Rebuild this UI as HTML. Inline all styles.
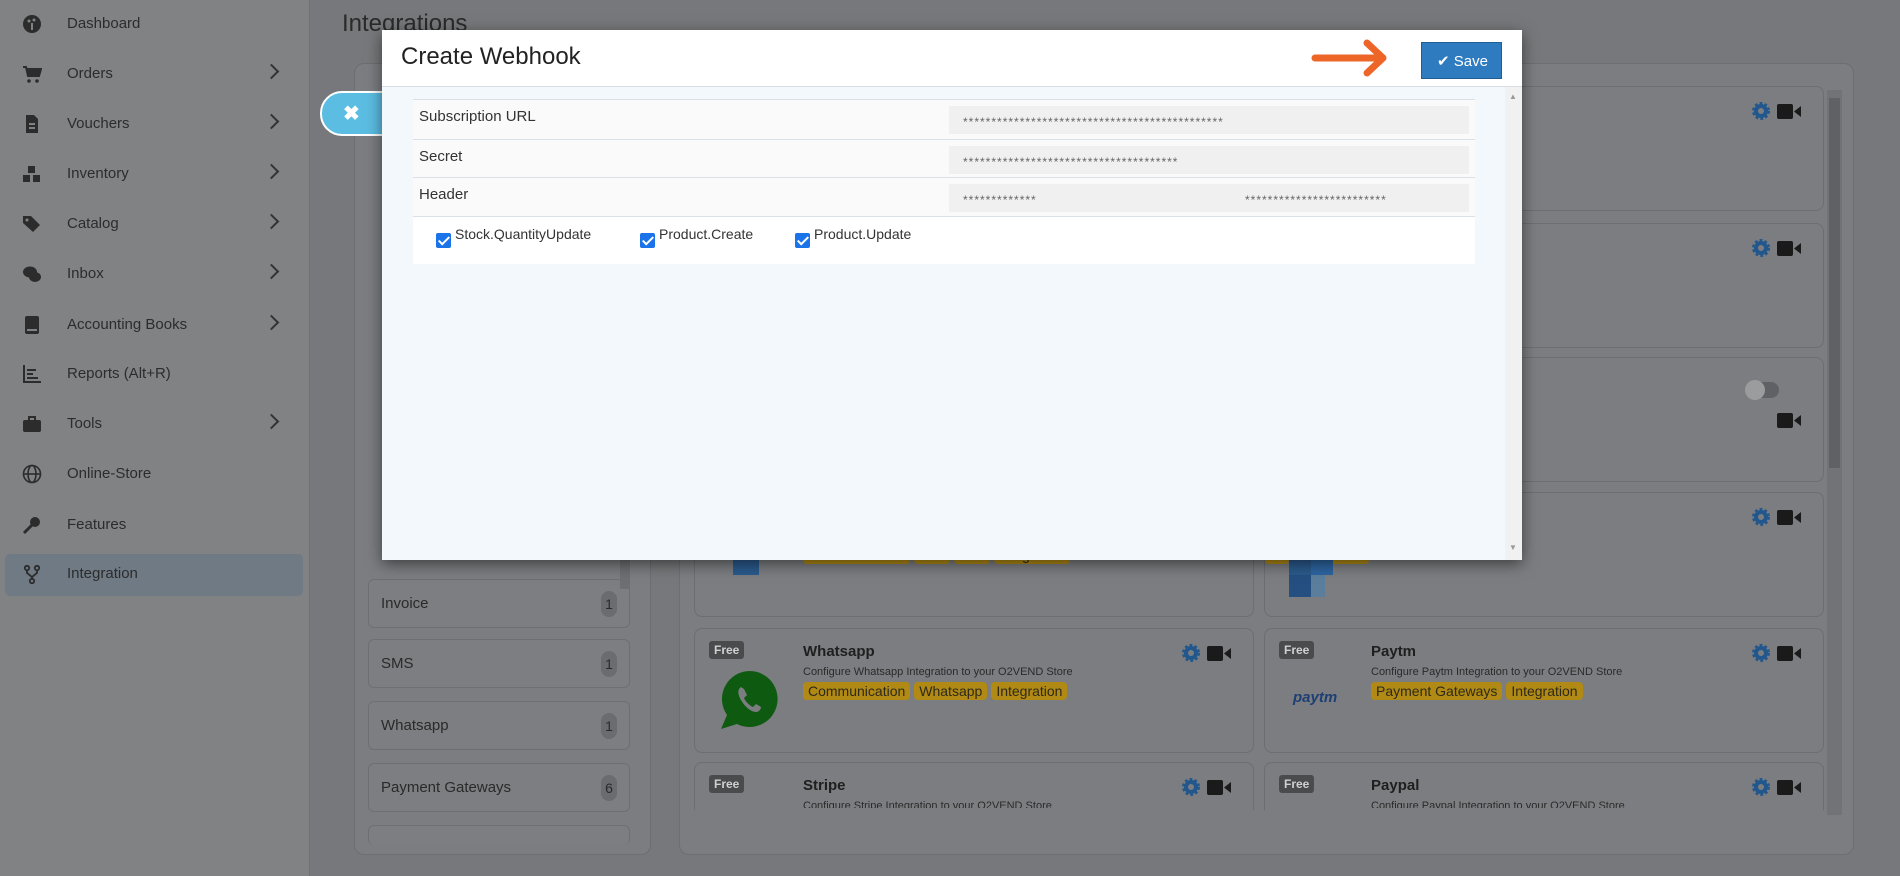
<!DOCTYPE html>
<html><head><meta charset="utf-8"><style>
*{box-sizing:border-box;margin:0;padding:0}
body{width:1900px;height:876px;overflow:hidden;background:#76787b;font-family:"Liberation Sans",sans-serif;position:relative;color:#2a2a2a}
.abs{position:absolute}
.side{left:0;top:0;width:310px;height:876px;background:#808284;border-right:1px solid #6f7174}
.si{position:absolute;left:0;width:310px;height:40px;font-size:15px;color:#2c2c2c}
.si .ic{position:absolute;left:22px;top:10px;width:20px;height:20px}
.si .t{position:absolute;left:67px;top:11px}
.si .ch{position:absolute;left:266px;top:12px;width:11px;height:11px;border-right:2px solid #333;border-top:2px solid #333;transform:rotate(45deg)}
.panel{background:#7b7d80;border:1px solid #6c6e71;border-radius:10px}
.li{position:absolute;left:14px;width:262px;height:49px;background:#7c7e81;border:1px solid #6d6f72;border-radius:6px;font-size:15px}
.li span{position:absolute;left:12px;top:15px}
.li b{position:absolute;right:12px;top:11px;width:16px;height:26px;border-radius:8px;background:#6a6c6f;font-weight:normal;text-align:center;line-height:26px;font-size:14px}
.card{position:absolute;width:560px;height:125px;background:#7b7d80;border:1px solid #6c6e71;border-radius:8px}
.free{position:absolute;left:14px;top:12px;background:#4a4b4d;color:#d0d0d0;font-size:12px;font-weight:bold;padding:2px 5px;border-radius:3px}
.ttl{position:absolute;left:108px;top:14px;font-weight:bold;font-size:15px;color:#1f1f1f}
.desc{position:absolute;left:108px;top:37px;font-size:11px;color:#2a2a2a;white-space:nowrap}
.tags{position:absolute;left:108px;top:53px;white-space:nowrap}
.tag{display:inline-block;background:#b08a14;color:#2e2a1c;font-size:14px;padding:1px 5px;border-radius:4px;margin-right:4px}
.gear{position:absolute;right:52px;top:14px;width:20px;height:20px}
.cam{position:absolute;right:22px;top:17px;width:24px;height:15px}
.modal{left:382px;top:30px;width:1140px;height:530px;background:#f3f8fd;box-shadow:0 4px 14px rgba(0,0,0,.5)}
.mh{position:absolute;left:0;top:0;width:1140px;height:57px;background:#fff;border-bottom:1px solid #d8dde3}
.row{position:absolute;left:31px;width:1062px;background:#fafafa;border-top:1px solid #dbe0e6;font-size:15px;color:#333}
.row .lb{position:absolute;left:6px;top:8px}
.inp{position:absolute;background:#f0f0f0;height:28px;font-size:12px;color:#666;padding:9px 14px;letter-spacing:1px;white-space:nowrap;overflow:hidden}
.cb{position:absolute;top:16px;width:15px;height:15px;background:#1a73e8;border-radius:2px}
.cb:after{content:"";position:absolute;left:5px;top:1px;width:4px;height:9px;border:solid #fff;border-width:0 2px 2px 0;transform:rotate(45deg)}
.cbl{position:absolute;top:9px;font-size:14px;color:#333}
</style></head><body>

<div class="abs side">
<div class="si" style="top:4px"><svg class="ic" viewBox="0 0 20 20"><circle cx="10" cy="10" r="9" fill="#2c2c2c"/><circle cx="7" cy="7" r="1.5" fill="#808284"/><circle cx="12" cy="6" r="1.5" fill="#808284"/><rect x="9" y="9" width="2" height="7" fill="#808284"/></svg><span class="t">Dashboard</span></div>
<div class="si" style="top:54px"><svg class="ic" viewBox="0 0 20 20"><path d="M1 3h3l2 9h11l2-7H5" fill="#2c2c2c" stroke="#2c2c2c" stroke-width="2"/><circle cx="7" cy="17" r="1.8" fill="#2c2c2c"/><circle cx="15" cy="17" r="1.8" fill="#2c2c2c"/></svg><span class="t">Orders</span><i class="ch"></i></div>
<div class="si" style="top:104px"><svg class="ic" viewBox="0 0 20 20"><path d="M4 1h8l4 4v14H4z" fill="#2c2c2c"/><rect x="7" y="9" width="6" height="2" fill="#808284"/><rect x="7" y="13" width="6" height="2" fill="#808284"/></svg><span class="t">Vouchers</span><i class="ch"></i></div>
<div class="si" style="top:154px"><svg class="ic" viewBox="0 0 20 20"><rect x="6" y="2" width="7" height="7" fill="#2c2c2c"/><rect x="1" y="11" width="7" height="7" fill="#2c2c2c"/><rect x="11" y="11" width="7" height="7" fill="#2c2c2c"/></svg><span class="t">Inventory</span><i class="ch"></i></div>
<div class="si" style="top:204px"><svg class="ic" viewBox="0 0 20 20"><path d="M1 2h8l9 9-7 7-10-9z" fill="#2c2c2c"/><circle cx="5" cy="6" r="1.5" fill="#808284"/></svg><span class="t">Catalog</span><i class="ch"></i></div>
<div class="si" style="top:254px"><svg class="ic" viewBox="0 0 20 20"><ellipse cx="8" cy="8" rx="7" ry="5.5" fill="#2c2c2c"/><ellipse cx="13" cy="13" rx="6" ry="5" fill="#2c2c2c"/></svg><span class="t">Inbox</span><i class="ch"></i></div>
<div class="si" style="top:305px"><svg class="ic" viewBox="0 0 20 20"><rect x="3" y="1" width="14" height="18" rx="2" fill="#2c2c2c"/><rect x="5" y="14" width="10" height="2" fill="#808284"/></svg><span class="t">Accounting Books</span><i class="ch"></i></div>
<div class="si" style="top:354px"><svg class="ic" viewBox="0 0 20 20"><path d="M2 1v17h17" stroke="#2c2c2c" stroke-width="2" fill="none"/><rect x="5" y="5" width="9" height="2" fill="#2c2c2c"/><rect x="5" y="9" width="6" height="2" fill="#2c2c2c"/><rect x="5" y="13" width="11" height="2" fill="#2c2c2c"/></svg><span class="t">Reports (Alt+R)</span></div>
<div class="si" style="top:404px"><svg class="ic" viewBox="0 0 20 20"><rect x="1" y="6" width="18" height="12" rx="2" fill="#2c2c2c"/><rect x="7" y="3" width="6" height="4" fill="none" stroke="#2c2c2c" stroke-width="2"/></svg><span class="t">Tools</span><i class="ch"></i></div>
<div class="si" style="top:454px"><svg class="ic" viewBox="0 0 20 20"><circle cx="10" cy="10" r="8.5" fill="none" stroke="#2c2c2c" stroke-width="1.6"/><ellipse cx="10" cy="10" rx="4" ry="8.5" fill="none" stroke="#2c2c2c" stroke-width="1.6"/><path d="M2 10h16" stroke="#2c2c2c" stroke-width="1.6"/></svg><span class="t">Online-Store</span></div>
<div class="si" style="top:505px"><svg class="ic" viewBox="0 0 20 20"><circle cx="13" cy="7" r="5" fill="#2c2c2c"/><path d="M10 10L2 18" stroke="#2c2c2c" stroke-width="3"/></svg><span class="t">Features</span></div>
<div class="abs" style="left:5px;top:554px;width:298px;height:42px;background:#6f7a85;border-radius:5px"></div>
<div class="si" style="top:554px"><svg class="ic" viewBox="0 0 20 20"><circle cx="5" cy="4" r="2.2" fill="none" stroke="#2c2c2c" stroke-width="1.8"/><circle cx="15" cy="4" r="2.2" fill="none" stroke="#2c2c2c" stroke-width="1.8"/><circle cx="10" cy="17" r="2.2" fill="none" stroke="#2c2c2c" stroke-width="1.8"/><path d="M5 6v3l5 4v2M15 6v3l-5 4" fill="none" stroke="#2c2c2c" stroke-width="1.8"/></svg><span class="t">Integration</span></div>
</div>

<div class="abs" style="left:342px;top:10px;font-size:24px;color:#2a2a2a">Integrations</div>

<div class="abs panel" style="left:354px;top:63px;width:297px;height:792px"></div>
<div class="abs" style="left:354px;top:63px;width:297px">
<div class="li" style="top:516px"><span>Invoice</span><b>1</b></div>
<div class="li" style="top:576px"><span>SMS</span><b>1</b></div>
<div class="li" style="top:638px"><span>Whatsapp</span><b>1</b></div>
<div class="li" style="top:700px"><span>Payment Gateways</span><b>6</b></div>
<div class="li" style="top:762px;height:20px;border-bottom:none"></div>
<div class="abs" style="left:266px;top:0;width:10px;height:526px;background:#6d6f72"></div>
</div>

<div class="abs panel" style="left:679px;top:63px;width:1175px;height:792px"></div>
<div class="abs" style="left:1827px;top:90px;width:15px;height:725px;background:#717376"></div>
<div class="abs" style="left:1829px;top:98px;width:11px;height:370px;background:#5f6164"></div>

<div class="card" style="left:1264px;top:86px"><svg class="gear" viewBox="0 0 20 20"><circle cx="10" cy="10" r="7" fill="#21578c" stroke="#21578c" stroke-width="4" stroke-dasharray="2.5 2"/><circle cx="10" cy="10" r="3" fill="#7b7d80"/></svg><svg class="cam" viewBox="0 0 24 15"><rect width="16" height="15" rx="2" fill="#1a1a1a"/><path d="M17 7.5L24 2v11z" fill="#1a1a1a"/></svg><div class="desc" style="left:0">Configure Integration to your O2VEND Store</div><div class="tags" style="left:0"><span class="tag">Integration</span></div></div>
<div class="card" style="left:1264px;top:223px"><svg class="gear" viewBox="0 0 20 20"><circle cx="10" cy="10" r="7" fill="#21578c" stroke="#21578c" stroke-width="4" stroke-dasharray="2.5 2"/><circle cx="10" cy="10" r="3" fill="#7b7d80"/></svg><svg class="cam" viewBox="0 0 24 15"><rect width="16" height="15" rx="2" fill="#1a1a1a"/><path d="M17 7.5L24 2v11z" fill="#1a1a1a"/></svg><div class="desc" style="left:0">Integration to your O2VEND Store</div><div class="tags" style="left:0"><span class="tag">Integration</span></div></div>
<div class="card" style="left:1264px;top:357px"><div class="abs" style="right:44px;top:24px;width:30px;height:16px;border-radius:8px;background:#5f6164"></div><div class="abs" style="right:58px;top:22px;width:20px;height:20px;border-radius:10px;background:#9a9c9e"></div><svg class="cam" style="top:55px" viewBox="0 0 24 15"><rect width="16" height="15" rx="2" fill="#1a1a1a"/><path d="M17 7.5L24 2v11z" fill="#1a1a1a"/></svg><div class="desc" style="left:0">on to your O2VEND Store</div><div class="tags" style="left:0"><span class="tag">Integration</span></div></div>
<div class="card" style="left:1264px;top:492px"><svg class="gear" viewBox="0 0 20 20"><circle cx="10" cy="10" r="7" fill="#21578c" stroke="#21578c" stroke-width="4" stroke-dasharray="2.5 2"/><circle cx="10" cy="10" r="3" fill="#7b7d80"/></svg><svg class="cam" viewBox="0 0 24 15"><rect width="16" height="15" rx="2" fill="#1a1a1a"/><path d="M17 7.5L24 2v11z" fill="#1a1a1a"/></svg><div class="desc" style="left:0">on to your O2VEND Store</div><div class="tags" style="left:0"><span class="tag">ail</span><span class="tag">Integration</span></div><div class="abs" style="left:24px;top:60px;width:22px;height:22px;background:#2a5a8c"></div><div class="abs" style="left:24px;top:82px;width:22px;height:22px;background:#244f80"></div><div class="abs" style="left:46px;top:82px;width:14px;height:22px;background:#5a7e9c"></div><div class="abs" style="left:46px;top:60px;width:22px;height:22px;background:#2d64a0"></div></div>
<div class="card" style="left:1264px;top:628px"><span class="free">Free</span><div class="ttl" style="left:106px">Paytm</div><div class="desc" style="left:106px">Configure Paytm Integration to your O2VEND Store</div><div class="tags" style="left:106px"><span class="tag">Payment Gateways</span><span class="tag">Integration</span></div><div class="abs" style="left:28px;top:60px;font-weight:bold;font-size:15px;color:#1e3f74;font-style:italic">paytm</div><svg class="gear" viewBox="0 0 20 20"><circle cx="10" cy="10" r="7" fill="#21578c" stroke="#21578c" stroke-width="4" stroke-dasharray="2.5 2"/><circle cx="10" cy="10" r="3" fill="#7b7d80"/></svg><svg class="cam" viewBox="0 0 24 15"><rect width="16" height="15" rx="2" fill="#1a1a1a"/><path d="M17 7.5L24 2v11z" fill="#1a1a1a"/></svg></div>
<div class="card" style="left:1264px;top:762px;height:48px;border-bottom:none;border-radius:8px 8px 0 0"><span class="free">Free</span><div class="ttl" style="left:106px">Paypal</div><div class="desc" style="left:106px;height:8px;overflow:hidden">Configure Paypal Integration to your O2VEND Store</div><svg class="gear" viewBox="0 0 20 20"><circle cx="10" cy="10" r="7" fill="#21578c" stroke="#21578c" stroke-width="4" stroke-dasharray="2.5 2"/><circle cx="10" cy="10" r="3" fill="#7b7d80"/></svg><svg class="cam" viewBox="0 0 24 15"><rect width="16" height="15" rx="2" fill="#1a1a1a"/><path d="M17 7.5L24 2v11z" fill="#1a1a1a"/></svg></div>

<div class="card" style="left:694px;top:492px"><div class="abs" style="left:38px;top:52px;width:26px;height:30px;background:#2a5a8c"></div><div class="tags"><span class="tag">Communication</span><span class="tag">Mail</span><span class="tag">Mail</span><span class="tag">Integration</span></div></div>
<div class="card" style="left:694px;top:628px"><span class="free">Free</span><div class="ttl" style="left:108px">Whatsapp</div><div class="desc">Configure Whatsapp Integration to your O2VEND Store</div><div class="tags"><span class="tag">Communication</span><span class="tag">Whatsapp</span><span class="tag">Integration</span></div><svg class="abs" style="left:22px;top:38px" width="66" height="66" viewBox="0 0 66 66"><path d="M33 4a28 28 0 1 1-13 53L4 62l6-14A28 28 0 0 1 33 4z" fill="#0e5a10"/><path d="M24 20c-3 2-4 6 0 13s10 12 15 12c3 0 5-3 5-5l-5-3-3 3c-3-1-8-6-9-9l3-3-3-6z" fill="#7b7d80"/></svg><svg class="gear" viewBox="0 0 20 20"><circle cx="10" cy="10" r="7" fill="#21578c" stroke="#21578c" stroke-width="4" stroke-dasharray="2.5 2"/><circle cx="10" cy="10" r="3" fill="#7b7d80"/></svg><svg class="cam" viewBox="0 0 24 15"><rect width="16" height="15" rx="2" fill="#1a1a1a"/><path d="M17 7.5L24 2v11z" fill="#1a1a1a"/></svg></div>
<div class="card" style="left:694px;top:762px;height:48px;border-bottom:none;border-radius:8px 8px 0 0"><span class="free">Free</span><div class="ttl" style="left:108px">Stripe</div><div class="desc" style="height:8px;overflow:hidden">Configure Stripe Integration to your O2VEND Store</div><svg class="gear" viewBox="0 0 20 20"><circle cx="10" cy="10" r="7" fill="#21578c" stroke="#21578c" stroke-width="4" stroke-dasharray="2.5 2"/><circle cx="10" cy="10" r="3" fill="#7b7d80"/></svg><svg class="cam" viewBox="0 0 24 15"><rect width="16" height="15" rx="2" fill="#1a1a1a"/><path d="M17 7.5L24 2v11z" fill="#1a1a1a"/></svg></div>

<div class="abs" style="left:320px;top:91px;width:70px;height:45px;background:#5bbde2;border:2px solid #fff;border-radius:22px 0 0 22px"></div>
<div class="abs" style="left:343px;top:101px;color:#fff;font-size:20px;font-weight:bold">✖</div>

<div class="abs modal">
<div class="mh">
<div class="abs" style="left:19px;top:13px;font-size:24px;color:#222">Create Webhook</div>
<svg class="abs" style="left:929px;top:8px" width="82" height="40" viewBox="0 0 82 40"><path d="M4 20h68M56 5l16 15-16 15" fill="none" stroke="#ee6528" stroke-width="7" stroke-linecap="round" stroke-linejoin="round"/></svg>
<div class="abs" style="left:1039px;top:12px;width:81px;height:37px;background:#2f7bbf;border:1px solid #225e96;color:#fff;font-size:15px;padding:9px 0 0 15px">✔ Save</div>
</div>
<div class="abs" style="left:1123px;top:57px;width:17px;height:473px;background:#f1f1f1"></div>
<div class="abs" style="left:1127px;top:62px;color:#999;font-size:8px">▲</div>
<div class="abs" style="left:1127px;top:513px;color:#999;font-size:8px">▼</div>
<div class="row" style="top:69px;height:40px"><span class="lb">Subscription URL</span><div class="inp" style="left:536px;top:6px;width:520px">**********************************************</div></div>
<div class="row" style="top:109px;height:38px"><span class="lb">Secret</span><div class="inp" style="left:536px;top:6px;width:520px">**************************************</div></div>
<div class="row" style="top:147px;height:39px"><span class="lb">Header</span><div class="inp" style="left:536px;top:6px;width:260px">*************</div><div class="inp" style="left:796px;top:6px;width:260px;padding-left:36px">*************************</div></div>
<div class="row" style="top:186px;height:48px;background:#fff"><div class="cb" style="left:23px"></div><span class="cbl" style="left:42px">Stock.QuantityUpdate</span><div class="cb" style="left:227px"></div><span class="cbl" style="left:246px">Product.Create</span><div class="cb" style="left:382px"></div><span class="cbl" style="left:401px">Product.Update</span></div>
</div>
</body></html>
